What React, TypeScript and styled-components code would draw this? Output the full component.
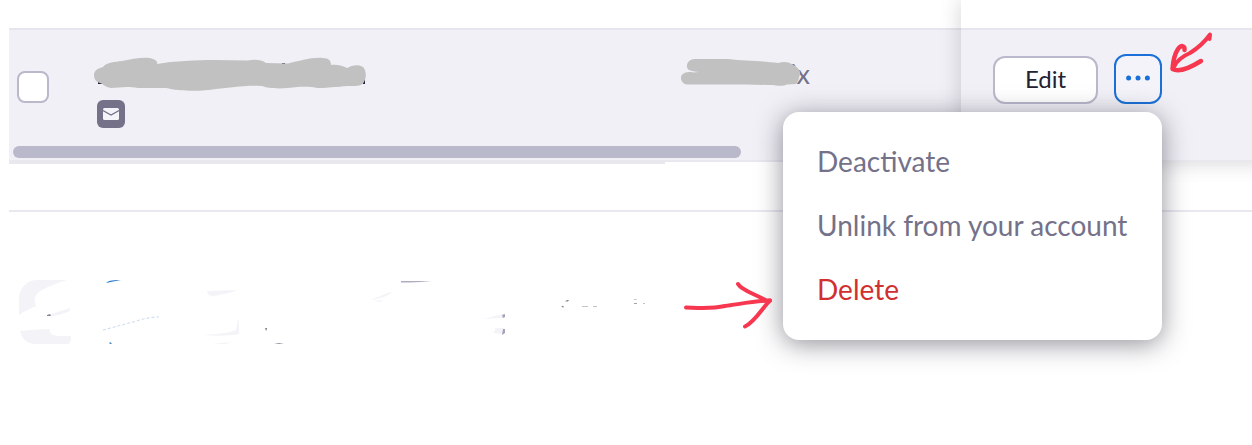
import React, { useState } from "react";
import styled, { createGlobalStyle } from "styled-components";

const GlobalStyle = createGlobalStyle`
  * {
    box-sizing: border-box;
  }
  body {
    margin: 0;
    background: #fff;
    font-family: Lato, "Open Sans", sans-serif;
    overflow: hidden;
  }
`;

const Page = styled.main`
  position: relative;
  width: 1252px;
  height: 445px;
  overflow: hidden;
  padding-left: 9px;
  background: #fff;
`;

const Table = styled.section`
  display: grid;
  grid-template-columns: 952px 1fr;
  height: 162px;
  margin-right: -24px;
`;

const Pane = styled.div`
  display: flex;
  flex-direction: column;
  min-width: 0;
`;

const PinnedPane = styled(Pane)`
  position: relative;
  background: #fff;
  box-shadow: 0 0 20px rgba(35, 35, 51, 0.2);
`;

const HeaderGap = styled.div`
  height: 28px;
`;

const Row = styled.div`
  flex: 1;
  display: flex;
  flex-direction: column;
  background: #f1f0f6;
  border-top: 2px solid #e6e5ed;
  border-bottom: 2px solid #e9e8ef;
`;

const Cells = styled.div`
  display: grid;
  grid-template-columns: 85px 587px 1fr;
  flex: 1;
`;

const CheckCell = styled.div`
  padding: 41px 0 0 8px;
`;

const Checkbox = styled.button`
  display: block;
  width: 32px;
  height: 32px;
  padding: 0;
  border: 2px solid #bab8cb;
  border-radius: 8px;
  background: #fff;
`;

const NameCell = styled.div`
  padding-top: 26px;
`;

const MailBadge = styled.div`
  display: flex;
  align-items: center;
  justify-content: center;
  width: 28px;
  height: 28px;
  margin: 6px 0 0 3px;
  border-radius: 6px;
  background: #747189;
`;

const DeptCell = styled.div`
  position: relative;
  width: 129px;
  padding-top: 28px;
  text-align: right;
  font-size: 27px;
  line-height: 32px;
  color: #747189;

  svg {
    position: absolute;
    left: 0;
    top: 26px;
  }
`;

const Drawing = styled.svg`
  display: block;
  overflow: visible;
`;

const ScrollBar = styled.div`
  width: 728px;
  height: 12px;
  margin: 0 0 2px 4px;
  border-radius: 6px;
  background: #bab8cb;
`;

const Actions = styled.div`
  display: flex;
  align-items: flex-start;
  gap: 16px;
  padding: 24px 0 0 32px;
`;

const EditButton = styled.button`
  width: 105px;
  height: 48px;
  margin-top: 2px;
  padding: 0;
  border: 2px solid #bab8cb;
  border-radius: 12px;
  background: #fff;
  color: #232333;
  font: 24px/42px Lato, sans-serif;
  padding-bottom: 2px;
`;

const MoreButton = styled.button`
  display: flex;
  align-items: center;
  justify-content: center;
  width: 48px;
  height: 50px;
  padding: 0 0 2px;
  border: 2px solid #1a70d8;
  border-radius: 12px;
  background: #f3f3f9;
`;

const Track = styled.div`
  width: 656px;
  height: 2px;
  background: #e9e8ef;
`;

const Divider = styled.hr`
  height: 2px;
  margin: 46px 0 68px;
  border: 0;
  background: #e9e8ef;
`;

const Menu = styled.div`
  position: absolute;
  left: 783px;
  top: 112px;
  width: 379px;
  height: 228px;
  padding: 17px 0 19px;
  border-radius: 16px;
  background: #fff;
  box-shadow: 0 4px 26px rgba(35, 35, 51, 0.5);
`;

const MenuItem = styled.button<{ $danger?: boolean }>`
  display: block;
  width: 100%;
  height: 64px;
  padding: 0 0 0 34px;
  border: 0;
  background: none;
  color: ${({ $danger }) => ($danger ? "#d03030" : "#747189")};
  font: 28px/64px Lato, sans-serif;
  text-align: left;
  white-space: nowrap;
`;

const Annotations = styled.svg`
  position: absolute;
  left: 0;
  top: 0;
  pointer-events: none;
`;

function NameScribble() {
  return (
    <Drawing width="272" height="38" viewBox="94 56 272 38">
      <path d="M98 81h6v3h-6zM363 80h2v4h-2zM282 63h3v2h-3z" fill="#232333" />
      <path
        d="M94 75C94 70 99 68 103 67C107 62 115 62 122 61C132 59 147 56 153 59C156 60 158 62 157 64C174 61 195 60 216 60L248 60.500C255 59 262 60 266 63L288 63.500C300 61 311 57 323 58C329 58 331 61 331 65C337 64 343 66 347 68C352 65 359 64 363 67C366 70 367 77 364 82C362 86 357 86 352 86C341 86 331 88 317 88C306 86 300 87 288 88C277 89 267 88 262 86C244 85 231 88 216 89C200 92 178 91 166 88L138 88C125 86 119 88 111 88C105 87 103 84 100 83C96 82 94 79 94 75Z"
        fill="#c1c1c1"
      />
    </Drawing>
  );
}

function DeptScribble() {
  return (
    <Drawing width="120" height="32" viewBox="681 56 120 32">
      <path
        d="M687 65C688 60 692 59 696 59L728 59C746 61 764 61 778 63C784 61 790 62 793 65C797 66 801 71 800 74C799 78 798 82 796 84L787 84.500C782 87 777 85 770 85L746 84.500H687C683 84 681 81 681 78C681 73 686 72 691 72C695 73 697 72 699 72C692 71 686 71 687 65Z"
        fill="#c1c1c1"
      />
    </Drawing>
  );
}

// What is left of the erased footer row
function ErasedRow() {
  return (
    <Drawing width="680" height="66" viewBox="9 280 680 66">
      <g fill="#f4f3f8">
        <path d="M19 315V298C20 287 27 280 37 280H67C57 283 48 287 42 290C35 294 33 299 36 306C30 309 24 311 19 315Z" />
        <path d="M20 331C31 330 40 329 50 329C49 334 53 336 60 336H71V340L69 344H35C27 344 22 339 20 331Z" />
        <path d="M48 315L70 308V311C63 314 56 316 48 316Z" />
        <path d="M207 291L236 290C236 292 226 293 213 296.500C209 296 207 294 207 291Z" />
        <path d="M238 320H239V334C230 336 216 336 204 335C217 334 230 333 236 330Z" />
        <path d="M212 344L232 342L226 344Z" />
        <path d="M370 300C378 298 384 293 392 292C388 296 380 299 370 300ZM373 301L384 300L380 302Z" />
        <path d="M484 319C492 317 497 315 504 314V318C498 318 491 319 484 319ZM493 333C496 331 494 328 496 328H504V334Z" />
      </g>
      <path d="M106 283C109 280 114 280 121 280C115 281 111 282 106 283Z" fill="#2d7fd0" />
      <path d="M103 330L135 321.500Q148 317 159 317" fill="none" stroke="#a5bfdc" strokeWidth="0.6" strokeDasharray="3 2" />
      <path d="M109 343L110.500 342L112 344H110Z" fill="#5590c8" />
      <path d="M401 281H419L432 281.500L410 282.500H401Z" fill="#b0adc3" />
      <path d="M502 315L505 314V317L503 318ZM503 329H505V333L502 335Z" fill="#a5a2b9" />
      <g fill="#858594">
        <path d="M47 315L50 314L51 316H47ZM265 328H267V329L266 331ZM274 343.300L284 343L279 344Z" />
        <path d="M565 301.500L567 300H569L568 301.500ZM561 307L563 305.500L564 307.500Z" />
        <path d="M582 306.300H588V306.800H582ZM593 306.400H597V306.900H593ZM634 299H636.500V299.600H634ZM634 303H637V303.700H634ZM643 303H645V303.600H643Z" />
      </g>
    </Drawing>
  );
}

export default function App() {
  const [open, setOpen] = useState(true);

  return (
    <>
      <GlobalStyle />
      <Page>
        <Table>
          <Pane>
            <HeaderGap />
            <Row>
              <Cells>
                <CheckCell>
                  <Checkbox aria-label="Select user" />
                </CheckCell>
                <NameCell>
                  <NameScribble />
                  <MailBadge>
                    <svg width="16" height="12" viewBox="0 0 16 12">
                      <rect width="16" height="12" rx="1.5" fill="#f5f4fa" />
                      <path d="M0 2.500L8 7L16 2.500" fill="none" stroke="#747189" strokeWidth="1.1" />
                    </svg>
                  </MailBadge>
                </NameCell>
                <DeptCell>
                  ix
                  <DeptScribble />
                </DeptCell>
              </Cells>
              <ScrollBar />
            </Row>
          </Pane>
          <PinnedPane>
            <HeaderGap />
            <Row>
              <Actions>
                <EditButton>Edit</EditButton>
                <MoreButton aria-label="More" onClick={() => setOpen(!open)}>
                  <svg width="24" height="6" viewBox="0 0 24 6" fill="#1a70d8">
                    <circle cx="2.600" cy="3" r="2.500" />
                    <circle cx="12" cy="3" r="2.500" />
                    <circle cx="21.400" cy="3" r="2.500" />
                  </svg>
                </MoreButton>
              </Actions>
            </Row>
          </PinnedPane>
        </Table>
        <Track />
        <Divider />
        <ErasedRow />
        {open && (
          <Menu>
            <MenuItem>Deactivate</MenuItem>
            <MenuItem>Unlink from your account</MenuItem>
            <MenuItem $danger>Delete</MenuItem>
          </Menu>
        )}
        <Annotations
          width="1252"
          height="445"
          viewBox="0 0 1252 445"
          fill="none"
          stroke="#f7374f"
          strokeWidth="4"
          strokeLinecap="round"
          strokeLinejoin="round"
        >
          <path d="M686 307.500C701 308 712 309 725 306C740 304 755 301 770 300.500" />
          <path d="M738 284C742 291 756 294 767 301L770 300.500C763 307 755 322 745 326.500" />
          <path d="M1209.500 39L1210 34.500C1204 43 1198 48 1190 53C1183 56 1177 60 1174 67" />
          <path d="M1184.500 50C1185 45 1181 45 1178 49C1174 55 1173 62 1172.500 69C1180 73 1193 66 1201 61" strokeWidth="4.500" />
        </Annotations>
      </Page>
    </>
  );
}
